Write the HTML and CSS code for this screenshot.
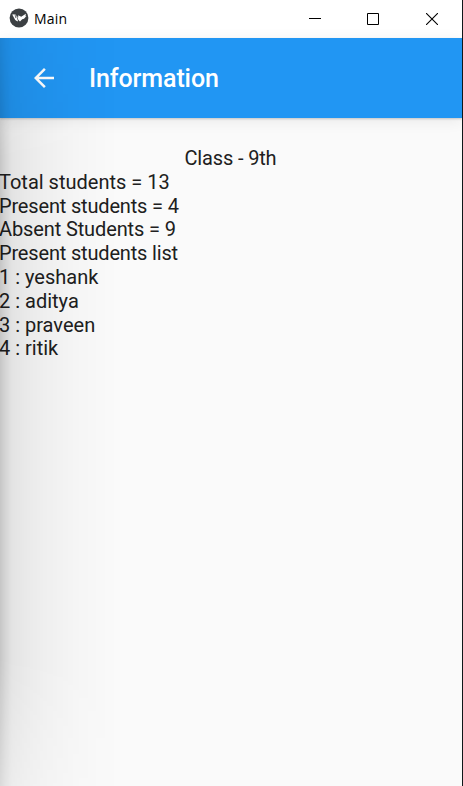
FILE: index.html
```
<!DOCTYPE html>
<html lang="en">
<head>
    <meta charset="UTF-8">
    <meta name="viewport" content="width=device-width, initial-scale=1.0">
    <title>Main</title>
    <link rel="stylesheet" href="styles.css">
</head>
<body>
    <div class="window">
        <!-- Window title bar -->
        <header class="titlebar">
            <svg class="app-icon" viewBox="0 0 20 20">
                <circle cx="10" cy="10" r="9.4" fill="#3c4043"/>
                <path d="M3.2 6.5 L6.3 6.2 L9.2 9.6 L9.2 7.2 L12.2 8.8 L16.9 5.7 L16.5 8.2 L17.5 8 L15 10.8 L13.2 11.2 L11 13.6 L9.2 11.8 L8.6 13.6 L6.2 12 Z" fill="#fff"/>
                <path d="M6 6.2 L6.8 10 M7.6 7.2 L9 12.4" stroke="#3c4043" stroke-width=".7"/>
            </svg>
            <span class="app-name">Main</span>
            <div class="controls">
                <svg class="control" viewBox="0 0 12 12"><path d="M0 5.5H12"/></svg>
                <svg class="control" viewBox="0 0 12 12"><path d="M.5 .5H11.5V11.5H.5Z"/></svg>
                <svg class="control close" viewBox="0 0 12 12"><path d="M0 0L12 12M12 0L0 12"/></svg>
            </div>
        </header>

        <div class="screen">
            <div class="toolbar">
                <svg class="back" viewBox="0 0 24 24"><path d="M20 11H7.83l5.59-5.59L12 4l-8 8 8 8 1.41-1.41L7.83 13H20v-2z"/></svg>
                <h1>Information</h1>
            </div>
            <main class="content">
                <p class="class-name">Class - 9th</p>
                <p class="total">Total students = 13</p>
                <p class="present">Present students = 4</p>
                <p class="absent">Absent Students = 9</p>
                <p class="list-title">Present students list</p>
                <p>1 : yeshank</p>
                <p>2 : aditya</p>
                <p>3 : praveen</p>
                <p>4 : ritik</p>
            </main>
            <!-- Shadow of the closed navigation drawer -->
            <div class="drawer-shadow"></div>
        </div>
    </div>
</body>
</html>
```
FILE: styles.css
```
body {
    margin: 0;
    background-color: #10171a;
    font-family: Roboto, sans-serif;
}
.window {
    width: 462px;
    height: 786px;
    display: flex;
    flex-direction: column;
    overflow: hidden;
}
.titlebar {
    height: 38px;
    flex: none;
    display: flex;
    align-items: center;
    background-color: #ffffff;
    padding-left: 9px;
    box-sizing: border-box;
}
.app-icon {
    width: 20px;
    height: 20px;
    margin-bottom: 2px;
}
.app-name {
    font-family: "Open Sans", sans-serif;
    font-size: 14px;
    letter-spacing: 0.2px;
    color: #000000;
    margin-left: 5px;
    margin-bottom: 2px;
}
.controls {
    display: flex;
    gap: 46px;
    margin-left: auto;
    padding-right: 24px;
}
.control {
    width: 12px;
    height: 12px;
    fill: none;
    stroke: #000000;
    stroke-width: 1;
}
.close {
    margin-left: 1px;
    stroke-width: 1.1;
}
.screen {
    position: relative;
    flex: 1;
    background-color: #fafafa;
}
.toolbar {
    height: 80px;
    display: flex;
    align-items: center;
    padding-left: 29px;
    background-color: #2196f3;
    box-shadow: 0 1px 2px rgba(0, 0, 0, 0.18), 0 3px 14px rgba(0, 0, 0, 0.07);
}
.back {
    width: 30px;
    height: 30px;
    fill: #ffffff;
}
h1 {
    margin: 2px 0 0 30px;
    font-size: 25px;
    font-weight: 500;
    line-height: 30px;
    letter-spacing: -0.1px;
    color: #ffffff;
}
.content {
    padding-top: 29px;
}
.content p {
    margin: 0 0 0 -1px;
    font-size: 20px;
    line-height: 23.8px;
    color: #202020;
    white-space: pre;
}
.content .class-name {
    text-align: center;
    letter-spacing: -0.15px;
}
.content .present,
.content .list-title {
    letter-spacing: -0.17px;
}
.content .absent {
    letter-spacing: -0.12px;
}
/* Lies over the toolbar and the text, fades to the right */
.drawer-shadow {
    position: absolute;
    top: 0;
    left: 0;
    bottom: 0;
    width: 118px;
    background: linear-gradient(to right,
        rgba(0, 0, 0, 0.21) 0,
        rgba(0, 0, 0, 0.15) 5px,
        rgba(0, 0, 0, 0.09) 12px,
        rgba(0, 0, 0, 0.065) 25px,
        rgba(0, 0, 0, 0.045) 45px,
        rgba(0, 0, 0, 0.02) 75px,
        rgba(0, 0, 0, 0) 118px);
    -webkit-mask-image: linear-gradient(rgba(0, 0, 0, 0.6), #000 120px, #000 620px, rgba(0, 0, 0, 0.6));
    mask-image: linear-gradient(rgba(0, 0, 0, 0.6), #000 120px, #000 620px, rgba(0, 0, 0, 0.6));
}
```
